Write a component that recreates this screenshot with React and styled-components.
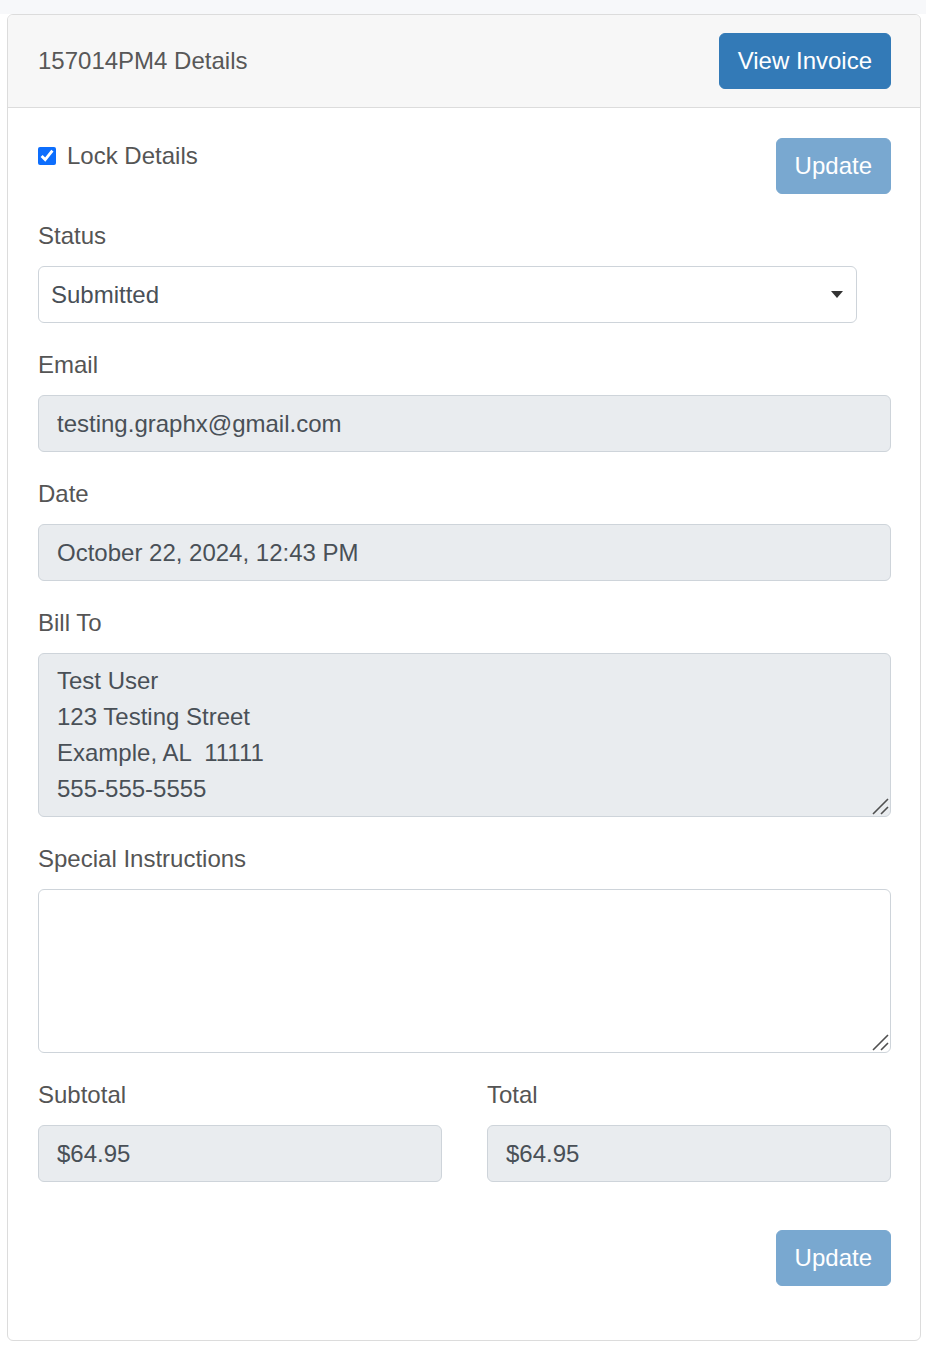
import styled, { createGlobalStyle } from "styled-components";

const GlobalStyle = createGlobalStyle`
  html, body {
    margin: 0;
    padding: 0;
    background: #fff;
    font-family: "Liberation Sans", Arial, sans-serif;
  }
  * {
    box-sizing: border-box;
  }
`;

const Grip = () => (
  <GripIcon width="18" height="18" viewBox="0 0 18 18">
    <path d="M2 17L17 2M10 17l7-7" stroke="#505050" strokeWidth="1.6" fill="none" />
  </GripIcon>
);

const App = () => {
  return (
    <>
      <GlobalStyle />
      <Page>
        <TopStrip />
        <Card>
          <CardHeader>
            <Title>157014PM4 Details</Title>
            <Button type="button">View Invoice</Button>
          </CardHeader>
          <CardBody>
            <LockRow>
              <CheckLabel>
                <Check type="checkbox" defaultChecked />
                <span>Lock Details</span>
              </CheckLabel>
              <Button type="button" disabled>
                Update
              </Button>
            </LockRow>

            <FormGroup>
              <Label>Status</Label>
              <SelectWrap>
                <Select defaultValue="submitted">
                  <option value="submitted">Submitted</option>
                  <option value="pending">Pending</option>
                  <option value="complete">Complete</option>
                </Select>
                <Caret width="12" height="7" viewBox="0 0 12 7">
                  <path d="M0 0h12L6 7z" fill="#333" />
                </Caret>
              </SelectWrap>
            </FormGroup>

            <FormGroup>
              <Label>Email</Label>
              <Input readOnly value="testing.graphx@gmail.com" />
            </FormGroup>

            <FormGroup>
              <Label>Date</Label>
              <Input readOnly value="October 22, 2024, 12:43 PM" />
            </FormGroup>

            <FormGroup>
              <Label>Bill To</Label>
              <AreaWrap>
                <TextArea
                  readOnly
                  rows={4}
                  value={"Test User\n123 Testing Street\nExample, AL  11111\n555-555-5555"}
                />
                <Grip />
              </AreaWrap>
            </FormGroup>

            <FormGroup>
              <Label>Special Instructions</Label>
              <AreaWrap>
                <TextArea rows={4} $editable defaultValue="" />
                <Grip />
              </AreaWrap>
            </FormGroup>

            <TotalsRow>
              <div>
                <Label>Subtotal</Label>
                <Input readOnly value="$64.95" />
              </div>
              <div>
                <Label>Total</Label>
                <Input readOnly value="$64.95" />
              </div>
            </TotalsRow>

            <Footer>
              <Button type="button" disabled>
                Update
              </Button>
            </Footer>
          </CardBody>
        </Card>
      </Page>
    </>
  );
};

const Page = styled.div`
  width: 926px;
  min-height: 1352px;
  background: #fff;
`;

const TopStrip = styled.div`
  height: 14px;
  background: #f7f8fa;
`;

const Card = styled.section`
  margin: 0 5px 0 7px;
  border: 1px solid #dcdcdc;
  border-radius: 6px;
  background: #fff;
  overflow: hidden;
`;

const CardHeader = styled.header`
  display: flex;
  align-items: center;
  justify-content: space-between;
  padding: 18px 29px 18px 30px;
  background: #f7f7f7;
  border-bottom: 1px solid #dcdcdc;
`;

const Title = styled.h2`
  margin: 0;
  font-size: 24px;
  font-weight: 400;
  line-height: 36px;
  color: #585858;
`;

const Button = styled.button`
  font-family: "Liberation Sans", Arial, sans-serif;
  font-size: 24px;
  line-height: 36px;
  padding: 9px 18px;
  color: #fff;
  background: #337ab7;
  border: 1px solid #337ab7;
  border-radius: 6px;
  cursor: pointer;

  &:disabled {
    opacity: 0.65;
    cursor: default;
  }
`;

const CardBody = styled.div`
  padding: 30px 29px 30px 30px;
`;

const LockRow = styled.div`
  display: flex;
  align-items: flex-start;
  justify-content: space-between;
  margin-bottom: 24px;
`;

const CheckLabel = styled.label`
  display: flex;
  align-items: center;
  gap: 11px;
  font-size: 24px;
  line-height: 36px;
  color: #555;
`;

const Check = styled.input`
  width: 18px;
  height: 18px;
  margin: 0;
  accent-color: #0d6efd;
`;

const FormGroup = styled.div`
  margin-bottom: 24px;
`;

const Label = styled.label`
  display: block;
  margin-bottom: 12px;
  font-size: 24px;
  line-height: 36px;
  color: #555;
`;

const fieldBase = `
  display: block;
  width: 100%;
  margin: 0;
  font-family: "Liberation Sans", Arial, sans-serif;
  font-size: 24px;
  line-height: 36px;
  color: #495057;
  border: 1px solid #ced4da;
  border-radius: 6px;
  outline: none;
`;

const SelectWrap = styled.div`
  position: relative;
  width: 819px;
`;

const Select = styled.select`
  ${fieldBase}
  height: 57px;
  padding: 9px 42px 9px 12px;
  background: #fff;
  appearance: none;
`;

const Caret = styled.svg`
  position: absolute;
  right: 14px;
  top: 25px;
  pointer-events: none;
`;

const Input = styled.input`
  ${fieldBase}
  height: 57px;
  padding: 9px 18px;
  background: #e9ecef;
`;

const AreaWrap = styled.div`
  position: relative;
`;

const TextArea = styled.textarea`
  ${fieldBase}
  height: 164px;
  padding: 9px 18px;
  background: ${(p) => (p.$editable ? "#fff" : "#e9ecef")};
  resize: none;
`;

const GripIcon = styled.svg`
  position: absolute;
  right: 2px;
  bottom: 2px;
  pointer-events: none;
`;

const TotalsRow = styled.div`
  display: grid;
  grid-template-columns: 1fr 1fr;
  column-gap: 45px;
`;

const Footer = styled.div`
  display: flex;
  justify-content: flex-end;
  margin: 48px 0 24px;
`;

export default App;
